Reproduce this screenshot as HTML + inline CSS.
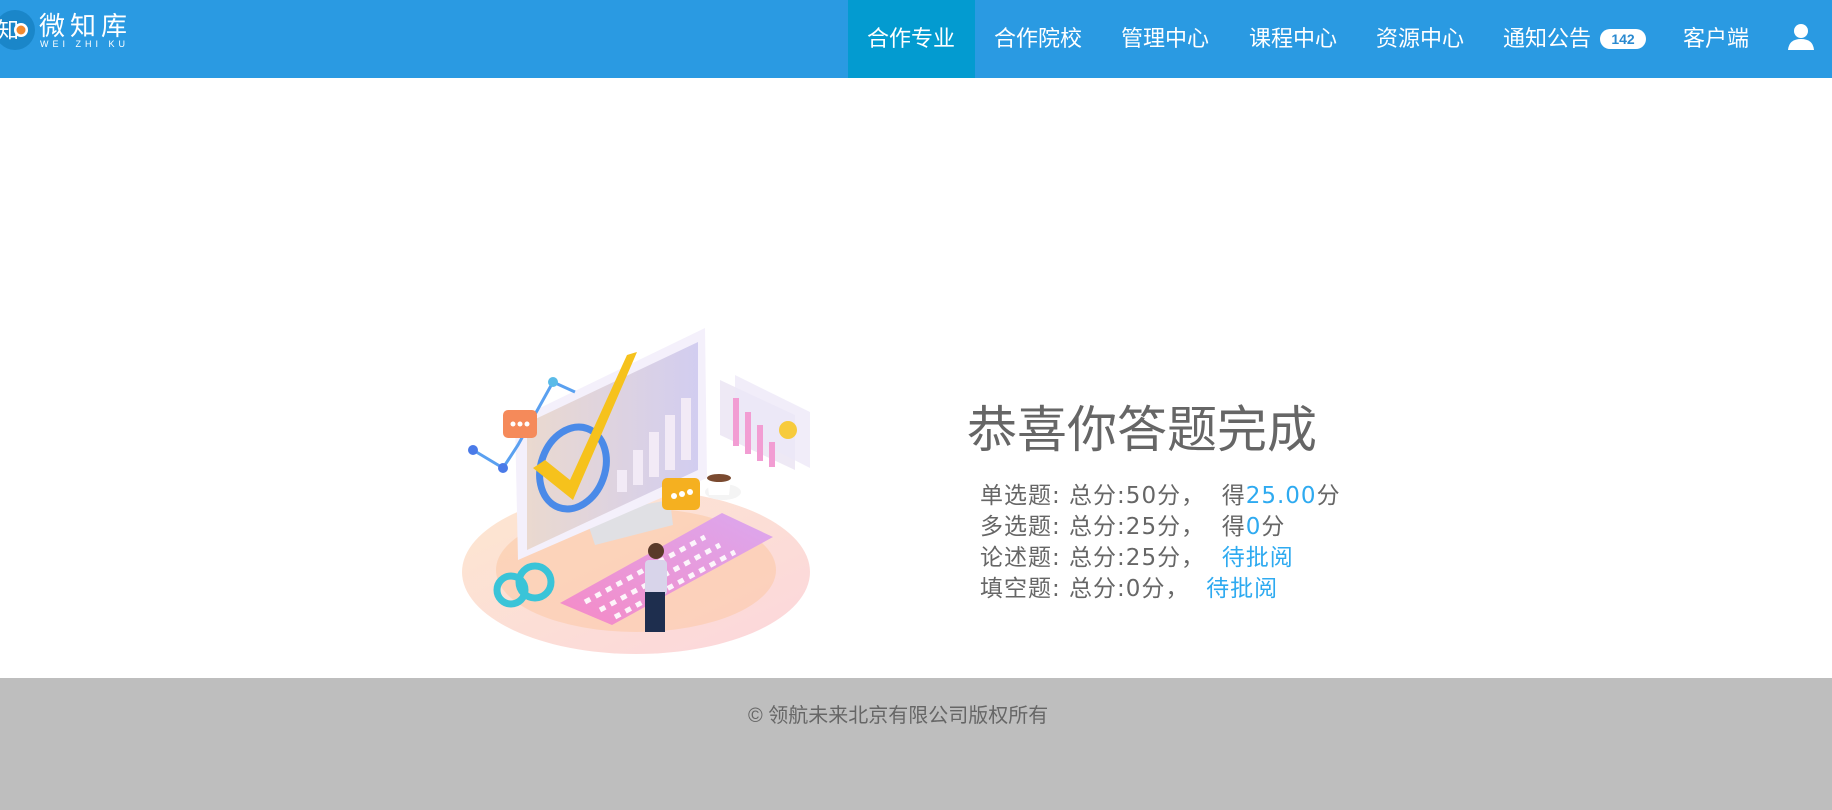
<!DOCTYPE html>
<html><head><meta charset="utf-8">
<style>
*{margin:0;padding:0;box-sizing:border-box}
body{width:1832px;height:810px;overflow:hidden;background:#fff;font-family:"Liberation Sans","Noto Sans CJK SC",sans-serif;position:relative}
.hdr{position:absolute;left:0;top:0;width:1832px;height:78px;background:#2a9ae2}
.nav{position:absolute;top:0;height:78px;line-height:78px;color:#fff;font-size:22px;white-space:nowrap}
.act{position:absolute;left:848px;top:0;width:127px;height:78px;background:#039bd0}
.badge{position:absolute;left:1600px;top:29px;width:46px;height:20px;border-radius:10px;background:#fff;color:#2a8ad0;font-size:14px;font-weight:bold;text-align:center;line-height:20px}
.t{position:absolute;color:#666;white-space:nowrap}
.b{color:#2eaaf0}
.ftr{position:absolute;left:0;top:678px;width:1832px;height:132px;background:#bebebe}
</style></head><body>
<div class="hdr"></div>
<svg style="position:absolute;left:-6px;top:9px" width="42" height="42" viewBox="0 0 42 42"><circle cx="21" cy="21" r="20" fill="#1a86c9"/><text x="3" y="29" font-size="22" fill="#fff" font-family="Noto Sans CJK SC">知</text><circle cx="27" cy="21" r="7" fill="#fff"/><circle cx="27" cy="21" r="4.5" fill="#f28a30"/></svg>
<div style="position:absolute;left:39px;top:6px;color:#fff;font-size:26px;letter-spacing:5px">微知库</div>
<div style="position:absolute;left:40px;top:39px;color:#fff;font-size:9px;letter-spacing:4px">WEI ZHI KU</div>
<div class="act"></div>
<div class="nav" style="left:867px">合作专业</div>
<div class="nav" style="left:994px">合作院校</div>
<div class="nav" style="left:1121px">管理中心</div>
<div class="nav" style="left:1249px">课程中心</div>
<div class="nav" style="left:1376px">资源中心</div>
<div class="nav" style="left:1503px">通知公告</div>
<div class="badge">142</div>
<div class="nav" style="left:1683px">客户端</div>
<svg style="position:absolute;left:1787px;top:23px" width="28" height="28" viewBox="0 0 28 28"><circle cx="14" cy="8" r="7" fill="#fff"/><path d="M1 27 Q2 16 14 16 Q26 16 27 27Z" fill="#fff"/></svg>

<svg style="position:absolute;left:455px;top:320px" width="370" height="340" viewBox="0 0 370 340">
<defs><linearGradient id="g1" x1="0" y1="0" x2="1" y2="1"><stop offset="0" stop-color="#fde7d0"/><stop offset="1" stop-color="#fcd6dc"/></linearGradient>
<linearGradient id="sc" x1="0" y1="0" x2="1" y2="0"><stop offset="0" stop-color="#ead9cf"/><stop offset="1" stop-color="#d2cdf0"/></linearGradient>
<linearGradient id="kb" x1="0" y1="1" x2="1" y2="0"><stop offset="0" stop-color="#f58ac6"/><stop offset="1" stop-color="#dba8ef"/></linearGradient></defs>
<ellipse cx="181" cy="252" rx="174" ry="82" fill="url(#g1)"/>
<ellipse cx="181" cy="250" rx="140" ry="62" fill="#fcc9a8" opacity=".6"/>
<polygon points="130,195 215,180 218,205 140,225" fill="#e0e0e4"/>
<polygon points="60,100 250,8 252,158 63,240" fill="#f4f0fb"/>
<polygon points="72,103 243,22 243,150 72,230" fill="url(#sc)"/>
<g fill="#f2eaf6"><rect x="162" y="150" width="10" height="22"/><rect x="178" y="130" width="10" height="35"/><rect x="194" y="112" width="10" height="45"/><rect x="210" y="95" width="10" height="55"/><rect x="226" y="78" width="10" height="62"/></g>
<ellipse cx="118" cy="148" rx="32" ry="42" fill="none" stroke="#4a8ae8" stroke-width="7" transform="rotate(20 118 148)"/>
<polygon points="78,148 118,180 182,32 172,35 115,160 90,140" fill="#f6c21c"/>
<g opacity=".85"><polygon points="265,60 340,95 340,150 265,115" fill="#ece6f4"/><polygon points="280,55 355,92 355,148 280,110" fill="#e8e2f6" opacity=".7"/>
<g fill="#f08ccc"><rect x="278" y="78" width="6" height="48"/><rect x="290" y="92" width="6" height="42"/><rect x="302" y="105" width="6" height="36"/><rect x="314" y="122" width="6" height="25"/></g><circle cx="333" cy="110" r="9" fill="#f6c21c"/></g>
<path d="M18 130 L48 148 L63 125 L98 62 L120 72" fill="none" stroke="#5aa0f0" stroke-width="3"/>
<circle cx="18" cy="130" r="5" fill="#4a7ae8"/><circle cx="48" cy="148" r="5" fill="#4a7ae8"/><circle cx="98" cy="62" r="5" fill="#5abbe8"/>
<rect x="48" y="90" width="34" height="28" rx="5" fill="#f58a5a"/><g fill="#fff"><circle cx="58" cy="104" r="2.5"/><circle cx="65" cy="104" r="2.5"/><circle cx="72" cy="104" r="2.5"/></g>
<rect x="207" y="158" width="38" height="32" rx="5" fill="#f5b020"/><g fill="#fff"><circle cx="219" cy="176" r="3"/><circle cx="227" cy="174" r="3"/><circle cx="235" cy="172" r="3"/></g>
<ellipse cx="268" cy="172" rx="18" ry="8" fill="#f4f4f4"/><path d="M252 158 L276 158 L274 175 L254 175Z" fill="#fff"/><ellipse cx="264" cy="158" rx="12" ry="4" fill="#7a4a30"/>
<polygon points="105,283 267,193 318,217 157,305" fill="url(#kb)"/>
<g fill="#fff" opacity=".9"><path d="M130 282 L250 217 M145 290 L265 225 M160 297 L280 232" stroke="#fff" stroke-width="5" stroke-dasharray="6 6"/></g>
<circle cx="56" cy="270" r="14" fill="none" stroke="#3ac4d8" stroke-width="7"/><circle cx="80" cy="262" r="16" fill="none" stroke="#3ac4d8" stroke-width="7"/>
<rect x="190" y="240" width="22" height="35" rx="4" fill="#d8d4ea"/><circle cx="201" cy="231" r="8" fill="#5a3a2a"/>
<rect x="190" y="272" width="20" height="40" fill="#1e2e4e"/>
</svg>

<div class="t" style="left:967px;top:400px;font-size:50px;line-height:60px">恭喜你答题完成</div>
<div class="t" style="left:980px;top:481px;font-size:23px;line-height:31px;letter-spacing:1px;font-family:'DejaVu Sans','Noto Sans CJK SC',sans-serif">单选题: 总分:50分，&nbsp; 得<span class="b">25.00</span>分<br>多选题: 总分:25分，&nbsp; 得<span class="b">0</span>分<br>论述题: 总分:25分，&nbsp; <span class="b">待批阅</span><br>填空题: 总分:0分，&nbsp; <span class="b">待批阅</span></div>

<div class="ftr"></div>
<div class="t" style="left:748px;top:704px;font-size:20px;line-height:24px">© 领航未来北京有限公司版权所有</div>
</body></html>
